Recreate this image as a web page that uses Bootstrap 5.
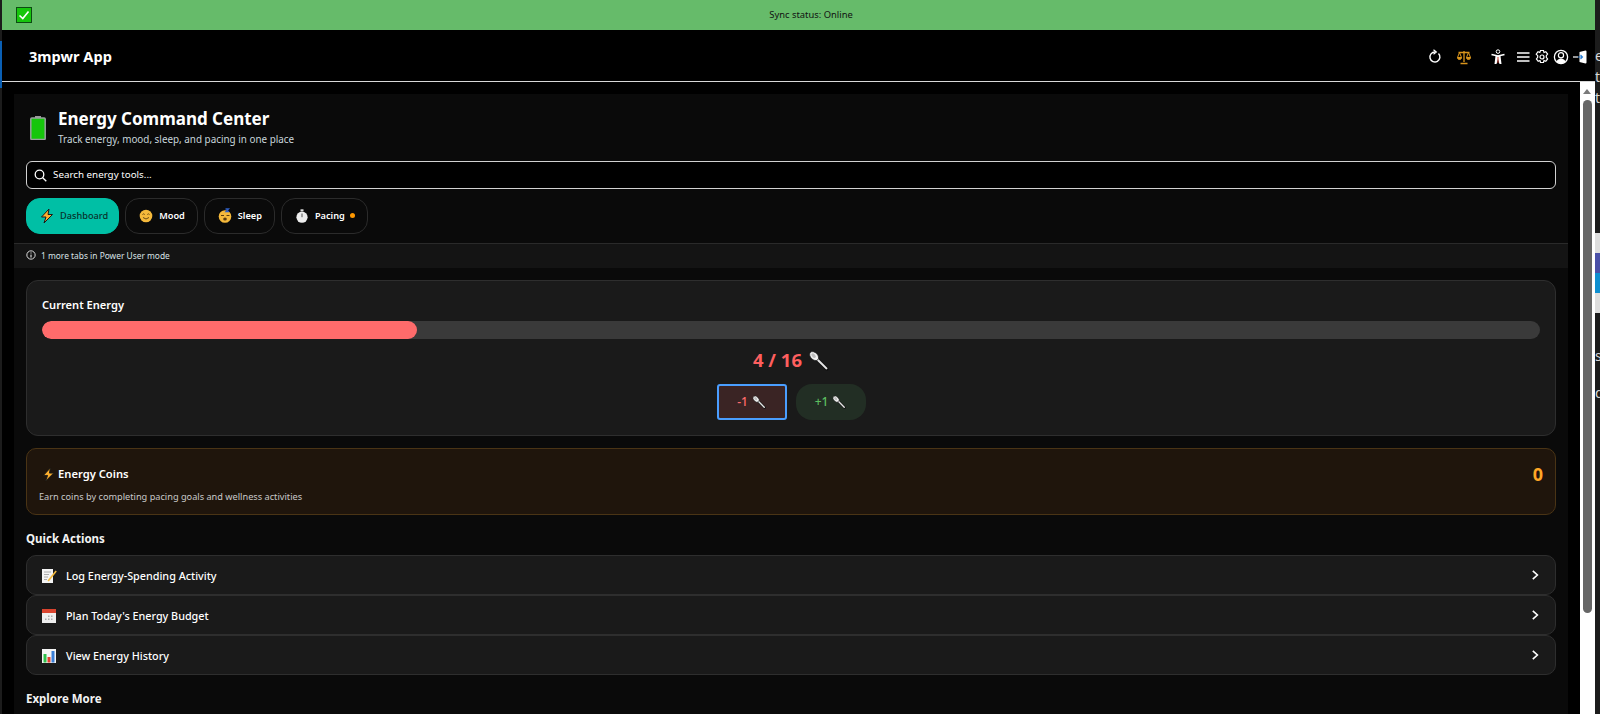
<!DOCTYPE html>
<html lang="en">
<head>
<meta charset="utf-8">
<title>3mpwr App</title>
<link href="https://cdn.jsdelivr.net/npm/bootstrap@5.3.0/dist/css/bootstrap.min.css" rel="stylesheet">
<style>
html,body{height:714px;overflow:hidden;background:#000;}
body{font-family:"Noto Sans","Open Sans",sans-serif;color:#fff;font-size:12px;}
.edge-left{width:2px;background:#1c1c1c;flex:none;padding-top:41px;}
.edge-left-blue{height:47px;background:#0a5fb4;}
.edge-right{width:5px;background:#1c1c1c;flex:none;overflow:hidden;font-size:14px;line-height:21px;color:#d8d8d8;padding-top:45px;}
.edge-right span{display:block;margin-left:0;}
.edge-pic{height:80px;margin-top:125px;background:linear-gradient(#ddd 0 25%,#4a50a8 25% 50%,#0e8fd0 50% 75%,#ddd 75%);}
.edge-gap{height:32px}
.edge-gap-sm{height:16px}
.app{width:1593px;flex:none;}
.sync-bar{height:30px;background:#66bb6a;color:#111;font-size:9.4px;padding-left:14px;}
.sync-box{width:16px;height:16px;flex:none;}
.sync-text{flex-grow:1;text-align:center;padding-right:5px;}
.top-nav{height:52px;background:#000;border-bottom:1px solid #d8d8d8;padding:2px 0 0 27px;}
.brand-name{font-size:14.6px;font-weight:700;color:#fff;}
.nav-ico{display:block;width:16px;height:16px;flex:none;}
.gap-a{margin-right:13px}
.gap-b{margin-right:18px}
.gap-c{margin-right:9px}
.gap-d{margin-right:3px}
.gap-e{margin-right:7px}
.main-row{height:632px;}
.main-pane{width:1578px;flex:none;padding:12px 12px 0;overflow:hidden;}
.panel{background:#0a0a0a;}
.panel-head{padding:12px 12px 9px;}
.page-ico{width:16px;height:24px;margin:10px 12px 0 4px;flex:none;}
.page-title{font-size:17px;font-weight:700;line-height:25px;margin:0;color:#fff;}
.page-sub{font-size:9.9px;line-height:16px;color:#c9d6dc;}
.search-box{height:28px;border:1px solid #d2d2d2;border-radius:6px;background:#000;padding:0 7px;margin:14px 0 9px;font-size:9.8px;gap:6px;}
.search-box input{background:transparent;border:0;outline:0;color:#fff;width:100%;font:inherit;padding:0;}
.search-box input::placeholder{color:#fff;opacity:1;}
.tabs-row{gap:6px;}
.tab-pill{height:36px;border-radius:14px;border:1px solid #2b2b2b;background:#0a0a0a;color:#fff;font-size:9.2px;font-weight:600;padding:0 12px;gap:5px;}
.tab-pill.is-on{background:#00bfa5;border-color:#00bfa5;color:#08312b;font-weight:500;padding-right:10px;}
.tab-pill svg{width:16px;height:16px;flex:none;}
.tab-dot{width:5px;height:5px;border-radius:50%;background:#ff9800;margin:-2px 0 0 0;}
.info-strip{height:25px;background:#141414;border-top:1px solid #2a2a2a;padding-left:12px;font-size:8.4px;color:#d9e2e6;gap:5px;}
.info-strip svg{width:10px;height:10px;margin-top:-3px;}
.panel-body{padding:12px 12px 40px;}
.energy-box{height:156px;background:#1a1a1a;border:1px solid #2e2e2e;border-radius:12px;padding:15px;}
.box-title{font-size:11.1px;font-weight:600;line-height:18px;}
.energy-track{height:18px;background:#3a3a3a;border-radius:9px;margin-top:7px;overflow:hidden;}
.energy-fill{height:18px;background:#ff6b6b;border-radius:9px;}
.energy-count{font-size:18.500px;font-weight:700;color:#ff5f5f;line-height:24px;margin:9px 0 12px;gap:6px;}
.spoon-lg{width:21px;height:21px;}
.adj-row{gap:9px;}
.adj-btn{width:70px;height:36px;font-size:12px;font-weight:500;gap:4px;padding:0;border-width:0;}
.adj-minus{background:#3a2424;color:#ff6b6b;border:2px solid #4a9eff;border-radius:3px;}
.adj-plus{background:#222e24;color:#5cbf60;border-radius:16px;}
.adj-btn svg{width:14px;height:14px;}
.coins-box{height:67px;margin-top:12px;background:#1f150c;border:1px solid #4a3415;border-radius:10px;padding:12px 12px 0 12px;}
.coins-title{font-size:11.200px;font-weight:600;line-height:26px;gap:2px;padding-left:2px;}
.coins-title svg{width:15px;height:15px;}
.coins-val{font-size:18px;font-weight:700;color:#ffa726;line-height:26px;}
.coins-desc{font-size:9.200px;color:#c9c9c9;line-height:14px;margin-top:3px;}
.sect-head{font-size:11.500px;font-weight:700;line-height:18px;margin:15px 0 7px;color:#f2f2f2;}
.act-item{height:40px;background:#1a1a1a;border:1px solid #2e2e2e;border-radius:10px;padding:2px 13px 0 14px;font-size:10.800px;font-weight:500;color:#fff;}
.act-item svg.em{width:16px;height:16px;margin-right:9px;flex:none;}
.act-chev{width:12px;height:12px;flex:none;margin:-3px 1px 0 auto;}
.scroll-rail{width:15px;flex:none;background:#fff;padding:0 3px;height:632px;}
.scroll-arrow{width:0;height:0;border-left:4.5px solid transparent;border-right:4.5px solid transparent;border-bottom:5px solid #7a7a7a;margin:7px 0 6px;}
.scroll-thumb{height:513px;background:#666;border-radius:5px;}
</style>
</head>
<body class="d-flex">
<svg width="0" height="0" class="d-none" aria-hidden="true">
<defs>
<symbol id="i-spoon" viewBox="0 0 20 20"><path d="M8 8 L18 18" stroke="#111" stroke-width="3.4" stroke-linecap="round"/><path d="M8 8 L17.5 17.5" stroke="#e6e6e6" stroke-width="2" stroke-linecap="round"/><ellipse cx="5.8" cy="5.8" rx="3.4" ry="5" transform="rotate(-45 5.8 5.8)" fill="#f2f2f2" stroke="#222" stroke-width=".7"/><ellipse cx="5.3" cy="5.3" rx="1.6" ry="2.6" transform="rotate(-45 5.3 5.3)" fill="#bdbdbd"/></symbol>
<symbol id="i-bolt" viewBox="0 0 16 16"><path d="M10 1 L2.5 9 H7 L5 15 L13.5 6.5 H9 Z" fill="#ffb02e" stroke="#1a1a1a" stroke-width="1"/></symbol>
<symbol id="i-chev" viewBox="0 0 12 12"><path d="M3.8 1.8 L8.4 6 L3.8 10.2" fill="none" stroke="#fff" stroke-width="1.6"/></symbol>
</defs>
</svg>
<div class="edge-left"><div class="edge-left-blue"></div></div>
<div class="app">
  <div class="sync-bar d-flex align-items-center">
    <svg class="sync-box" viewBox="0 0 16 16"><rect x=".5" y=".5" width="15" height="15" fill="#16c60c" stroke="#0b4d12"/><path d="M3.5 8.5 L6.8 11.5 L12.5 4.5" fill="none" stroke="#fff" stroke-width="1.6"/></svg>
    <div class="sync-text">Sync status: Online</div>
  </div>
  <nav class="navbar top-nav d-flex align-items-center">
    <span class="brand-name">3mpwr App</span>
    <div class="d-flex align-items-center nav-tools">
      <svg class="nav-ico gap-a" viewBox="0 0 16 16" fill="none" stroke="#fff" stroke-width="1.400"><path d="M11.500 4.500 A5 5 0 1 1 8 3"/><path d="M6.500 .8 L9.300 3 L6.500 5.200" stroke-width="1.200"/></svg>
      <svg class="nav-ico gap-b" viewBox="0 0 16 16" fill="none" stroke="#d9951c" stroke-width="1"><path d="M8 2v11M4.500 14.500h7M2.500 3.500h11" stroke-width="1.300"/><path d="M3.500 3.500 1.500 8.500h4zM12.500 3.500 10.500 8.500h4z"/><path d="M1.500 8.500a2 2 0 0 0 4 0zM10.500 8.500a2 2 0 0 0 4 0z" fill="#d9951c"/></svg>
      <svg class="nav-ico gap-c" viewBox="0 0 16 16" fill="none"><circle cx="8" cy="2.600" r="1.800" stroke="#fff"/><path d="M1.500 5.500 8 7l6.500-1.500" stroke="#fff" stroke-width="1.600"/><path d="M5.500 7h5l1 8h-2L8 10l-1.500 5h-2z" fill="#fff"/><path d="M8 8v6" stroke="#c0392b"/></svg>
      <svg class="nav-ico gap-d" viewBox="0 0 16 16" stroke="#fff" stroke-width="1.300"><path d="M2 4h12.500M2 8h12.500M2 12h12.500"/></svg>
      <svg class="nav-ico gap-d" viewBox="0 0 16 16" fill="none" stroke="#fff" stroke-width="1.200"><path d="M6.500 1.500h3l.5 2 1.800-.8 1.800 2.400-1.300 1.600v1.600l1.300 1.600-1.800 2.400-1.800-.8-.5 2h-3l-.5-2-1.800.8-1.800-2.400 1.300-1.600V6.700L2.200 5.100 4 2.700l1.800.8z"/><circle cx="8" cy="8" r="2"/></svg>
      <svg class="nav-ico gap-d" viewBox="0 0 16 16" fill="none"><circle cx="8" cy="8" r="6.600" stroke="#fff" stroke-width="1.300"/><circle cx="8" cy="6.200" r="2.600" stroke="#fff" stroke-width="1.200"/><path d="M3.500 12.500c1-2.200 3-3 4.500-3s3.500.8 4.500 3c-1.200 1.300-2.800 2-4.500 2s-3.300-.7-4.500-2z" fill="#fff"/></svg>
      <svg class="nav-ico gap-e" viewBox="0 0 16 16" fill="none"><path d="M7.500 3l6-1.500a1 1 0 0 1 1 1v11a1 1 0 0 1-1 1l-6-1.500z" fill="#fff"/><path d="M1 8h5" stroke="#fff" stroke-width="1.200"/><path d="M6 8h4M8.500 6 10.500 8l-2 2" stroke="#2a7fd6" stroke-width="1.100"/></svg>
    </div>
  </nav>
  <div class="main-row d-flex">
    <main class="main-pane">
      <div class="panel">
        <div class="panel-head">
          <div class="d-flex">
            <svg class="page-ico" viewBox="0 0 16 24"><rect x="5" y="0" width="6" height="3" fill="#9a9a9a"/><rect x=".8" y="2" width="14.400" height="21.500" rx="1" fill="#16c60c" stroke="#9aa0a0" stroke-width="1.500"/></svg>
            <div>
              <h1 class="page-title">Energy Command Center</h1>
              <div class="page-sub">Track energy, mood, sleep, and pacing in one place</div>
            </div>
          </div>
          <div class="search-box d-flex align-items-center">
            <svg width="13" height="13" viewBox="0 0 13 13" fill="none" stroke="#fff" stroke-width="1.300" class="flex-shrink-0"><circle cx="5.500" cy="5.500" r="4.300"/><path d="M8.700 8.700 12.300 12.300"/></svg>
            <input type="text" placeholder="Search energy tools...">
          </div>
          <div class="d-flex tabs-row">
            <div class="tab-pill is-on d-flex align-items-center"><svg viewBox="0 0 16 16"><use href="#i-bolt"/></svg>Dashboard</div>
            <div class="tab-pill d-flex align-items-center"><svg viewBox="0 0 16 16"><circle cx="8" cy="8" r="6.300" fill="#f5b93b"/><path d="M4.500 6.500q1.100-1.300 2.200 0M9.300 6.500q1.100-1.300 2.200 0" stroke="#6b4a12" fill="none"/><path d="M5 9.500q3 3 6 0" stroke="#6b4a12" fill="none"/></svg>Mood</div>
            <div class="tab-pill d-flex align-items-center"><svg viewBox="0 0 16 16"><circle cx="8" cy="8.500" r="6.300" fill="#f5b93b"/><path d="M4 7.500h3M9.500 7.500h3" stroke="#5a3d10"/><ellipse cx="8" cy="11" rx="1.800" ry="1.500" fill="#5a3d10"/><path d="M8.500 1h3L9 3.500h3" stroke="#2f5fc4" stroke-width="1.300" fill="none"/></svg>Sleep</div>
            <div class="tab-pill d-flex align-items-center"><svg viewBox="0 0 16 16"><circle cx="8" cy="9.200" r="5.600" fill="#eee"/><rect x="6.500" y="1.300" width="3" height="2" fill="#ddd"/><path d="M8 9.200V5.500" stroke="#555"/></svg>Pacing<span class="tab-dot"></span></div>
          </div>
        </div>
        <div class="info-strip d-flex align-items-center">
          <svg viewBox="0 0 12 12" fill="none" stroke="#fff"><circle cx="6" cy="6" r="5"/><path d="M6 5.500V9M6 3v1.200" stroke-width="1.200"/></svg>
          <span>1 more tabs in Power User mode</span>
        </div>
        <div class="panel-body">
          <section class="energy-box">
            <div class="box-title">Current Energy</div>
            <div class="energy-track"><div class="energy-fill" style="width:25%"></div></div>
            <div class="energy-count d-flex justify-content-center align-items-center">4 / 16 <svg class="spoon-lg"><use href="#i-spoon"/></svg></div>
            <div class="d-flex justify-content-center adj-row">
              <button type="button" class="btn adj-btn adj-minus d-flex align-items-center justify-content-center">-1 <svg><use href="#i-spoon"/></svg></button>
              <button type="button" class="btn adj-btn adj-plus d-flex align-items-center justify-content-center">+1 <svg><use href="#i-spoon"/></svg></button>
            </div>
          </section>
          <section class="coins-box">
            <div class="d-flex justify-content-between">
              <div class="coins-title d-flex align-items-center"><svg viewBox="0 0 16 16"><use href="#i-bolt"/></svg>Energy Coins</div>
              <div class="coins-val">0</div>
            </div>
            <div class="coins-desc">Earn coins by completing pacing goals and wellness activities</div>
          </section>
          <div class="sect-head">Quick Actions</div>
          <div class="d-flex flex-column">
            <div class="act-item d-flex align-items-center">
              <svg class="em" viewBox="0 0 16 16"><rect x="1" y="1" width="11" height="14" fill="#f4f4f4"/><path d="M3 4h7M3 6.500h5M3 9h4M3 11.500h3" stroke="#999" stroke-width=".8"/><path d="M6.500 12.500 14.500 2.500 15.800 3.500 7.800 13.500z" fill="#f5b93b"/></svg>
              Log Energy-Spending Activity
              <svg class="act-chev"><use href="#i-chev"/></svg>
            </div>
            <div class="act-item d-flex align-items-center">
              <svg class="em" viewBox="0 0 16 16"><rect x="1" y="1" width="14" height="14" fill="#eee"/><rect x="1" y="1" width="14" height="4" fill="#d9442f"/><path d="M7 7.500h1.500v1.500H7zM10 7.500h1.500v1.500H10zM7 10.500h1.500v1.500H7zM10 10.500h1.500v1.500H10zM4 10.500h1.500v1.500H4z" fill="#aaa"/></svg>
              Plan Today's Energy Budget
              <svg class="act-chev"><use href="#i-chev"/></svg>
            </div>
            <div class="act-item d-flex align-items-center">
              <svg class="em" viewBox="0 0 16 16"><rect x="1" y="1" width="14" height="14" fill="#f4f4f4"/><rect x="2.500" y="6" width="3" height="8.500" fill="#2fbf4a"/><rect x="6.500" y="9" width="3" height="5.500" fill="#e2402f"/><rect x="10.500" y="3" width="3" height="11.500" fill="#3a7fd6"/></svg>
              View Energy History
              <svg class="act-chev"><use href="#i-chev"/></svg>
            </div>
          </div>
          <div class="sect-head">Explore More</div>
        </div>
      </div>
    </main>
    <div class="scroll-rail"><div class="scroll-arrow"></div><div class="scroll-thumb"></div></div>
  </div>
</div>
<div class="edge-right"><span>e</span><span>t</span><span>t</span><div class="edge-pic"></div><div class="edge-gap"></div><span>s</span><div class="edge-gap-sm"></div><span>d</span></div>
<script src="https://cdn.jsdelivr.net/npm/bootstrap@5.3.0/dist/js/bootstrap.bundle.min.js"></script>
</body>
</html>
